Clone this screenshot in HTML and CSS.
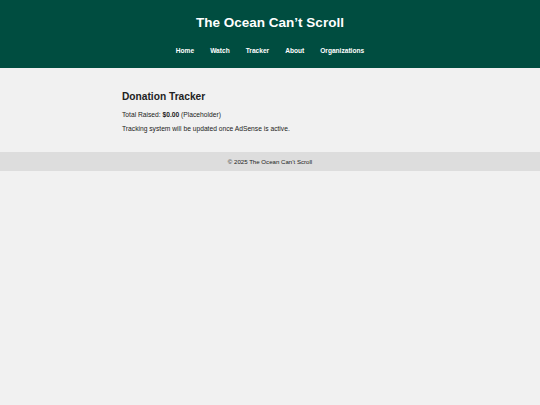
FILE: index.html
```html
<!DOCTYPE html>
<html lang="en">
<head>
<meta charset="utf-8">
<title>Donation Tracker</title>
<link rel="stylesheet" href="styles.css">
</head>
<body>
<header class="site-header">
  <h1 class="site-title">The Ocean Can’t Scroll</h1>
  <nav class="site-nav">
    <a href="#">Home</a>
    <a href="#">Watch</a>
    <a href="#">Tracker</a>
    <a href="#">About</a>
    <a href="#">Organizations</a>
  </nav>
</header>
<main class="content">
  <h2 class="page-title">Donation Tracker</h2>
  <p class="text">Total Raised: <strong>$0.00</strong> (Placeholder)</p>
  <p class="text">Tracking system will be updated once AdSense is active.</p>
</main>
<footer class="site-footer">
  <p>© 2025 The Ocean Can’t Scroll</p>
</footer>
</body>
</html>
```

FILE: styles.css
```css
html, body {
  margin: 0;
  padding: 0;
}
body {
  background: #f1f1f1;
  font-family: "Liberation Sans", Arial, sans-serif;
  color: #222;
}
.site-header {
  background: #004d40;
  color: #fff;
  height: 68px;
  box-sizing: border-box;
  padding-top: 14px;
  text-align: center;
}
.site-title {
  margin: 0;
  font-size: 13.5px;
  line-height: 18px;
  font-weight: bold;
}
.site-nav {
  margin-top: 14px;
  display: flex;
  justify-content: center;
  gap: 16px;
}
.site-nav a {
  color: #fff;
  text-decoration: none;
  font-weight: bold;
  font-size: 6.6px;
  line-height: 10px;
}
.content {
  max-width: 296px;
  margin: 0 auto;
  padding: 22px 0 19px;
}
.page-title {
  margin: 0 0 7px;
  font-size: 10.2px;
  line-height: 14px;
}
.text {
  margin: 0 0 6px;
  font-size: 6.7px;
  line-height: 8px;
}
.text:last-child {
  margin-bottom: 0;
}
.site-footer {
  background: #ddd;
  height: 19px;
  display: flex;
  align-items: center;
  justify-content: center;
}
.site-footer p {
  margin: 0;
  font-size: 6.1px;
  color: #222;
}
```
